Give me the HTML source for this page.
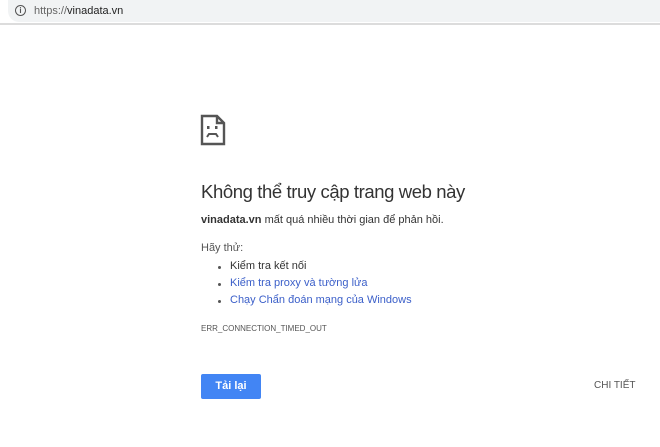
<!DOCTYPE html>
<html><head><meta charset="utf-8"><style>
body{margin:0;width:660px;height:447px;background:#fff;font-family:"Liberation Sans",sans-serif;position:relative;overflow:hidden;color:#333}
.bar{position:absolute;left:8px;top:0;width:660px;height:22px;background:#f1f3f4;border-radius:0 0 0 11px}
.line{position:absolute;left:0;top:23px;width:660px;height:2px;background:#dcdcdc}
.url{position:absolute;left:34px;top:5px;font-size:11px;color:#666}
.url b{font-weight:normal;color:#222}
.info{position:absolute;left:15px;top:5px;width:9px;height:9px;border:1.3px solid #555;border-radius:50%;font-size:8px;line-height:9px;text-align:center;color:#555;font-weight:bold}
.a{position:absolute;left:201px;white-space:nowrap}
h1{position:absolute;left:201px;top:181px;margin:0;font-weight:normal;font-size:18.5px;letter-spacing:-0.4px;color:#333}
li{position:absolute;left:230px;font-size:11px;white-space:nowrap}
.dot{position:absolute;left:218px;width:3px;height:3px;border-radius:50%;background:#555}
.btn{position:absolute;left:201px;top:374px;width:60px;height:25px;background:#4285f4;border-radius:2px;color:#fff;font-size:11px;font-weight:bold;text-align:center;line-height:25px}
</style></head><body>
<div class="bar"></div><div class="line"></div>
<div class="info">i</div>
<div class="url">https://<b>vinadata.vn</b></div>
<svg style="position:absolute;left:200px;top:114px" width="26" height="32" viewBox="0 0 26 32"><path d="M2 2H17L24 9V30H2Z M17 2V9H24" fill="none" stroke="#555" stroke-width="2.4"/><rect x="7" y="12" width="2.5" height="3" fill="#555"/><rect x="15" y="12" width="2.5" height="3" fill="#555"/><path d="M7 23 L9 20 H16 L18 23" fill="none" stroke="#555" stroke-width="2"/></svg>
<h1>Không thể truy cập trang web này</h1>
<div class="a" style="top:214px;font-size:11px"><b>vinadata.vn</b> mất quá nhiều thời gian để phản hồi.</div>
<div class="a" style="top:242px;font-size:11px;color:#555">Hãy thử:</div>
<div class="dot" style="top:266px"></div><li style="top:260px;list-style:none">Kiểm tra kết nối</li>
<div class="dot" style="top:283px"></div><li style="top:277px;list-style:none;color:#3b5fc9">Kiểm tra proxy và tường lửa</li>
<div class="dot" style="top:300px"></div><li style="top:294px;list-style:none;color:#3b5fc9">Chạy Chẩn đoán mạng của Windows</li>
<div class="a" style="top:324px;font-size:8px;color:#555">ERR_CONNECTION_TIMED_OUT</div>
<div class="btn">Tải lại</div>
<div class="a" style="left:594px;top:380px;font-size:10px;color:#555">CHI TIẾT</div>
</body></html>
